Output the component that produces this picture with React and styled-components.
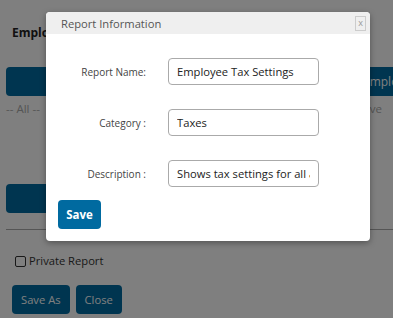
import React from 'react';
import styled, { createGlobalStyle } from 'styled-components';

const GlobalStyle = createGlobalStyle`
  body {
    margin: 0;
    font-family: "Open Sans", "Liberation Sans", sans-serif;
  }
`;

const Page = styled.div`
  position: relative;
  width: 393px;
  height: 318px;
  overflow: hidden;
  background: #fff;
  padding: 24px 0 0 6px;
  box-sizing: border-box;
`;

const Heading = styled.div`
  font-size: 12px;
  font-weight: bold;
  color: #222;
  padding-left: 6px;
  line-height: 17px;
`;

const Columns = styled.div`
  display: grid;
  grid-template-columns: 300px 120px;
  column-gap: 49px;
  margin-top: 26px;
`;

const Column = styled.div`
  display: flex;
  flex-direction: column;
`;

const ListHeader = styled.div`
  height: 29px;
  border-radius: 4px;
  background: #006aa0;
  color: #fff;
  font-size: 12px;
  line-height: 29px;
  padding-left: 8px;
  text-align: ${p => p.$align || 'left'};
`;

const Option = styled.div`
  font-size: 11.5px;
  color: #aaa;
  margin-top: 4px;
  line-height: 17px;
  margin-left: ${p => p.$indent || 0}px;
`;

const WideButton = styled.div`
  width: 180px;
  height: 29px;
  border-radius: 4px;
  background: #006aa0;
  margin-top: 67px;
`;

const Rule = styled.hr`
  border: 0;
  border-top: 1px solid #aaa;
  margin: 16px 0 0 0;
`;

const CheckRow = styled.label`
  display: flex;
  align-items: center;
  gap: 3px;
  margin: 23px 0 0 9px;
  font-size: 11.2px;
  color: #333;
  line-height: 16px;
`;

const Box = styled.span`
  width: 9px;
  height: 9px;
  border: 1px solid #333;
  border-radius: 2px;
  background: #fff;
`;

const Actions = styled.div`
  display: flex;
  gap: 6px;
  margin: 16px 0 0 6px;
`;

const ActionButton = styled.button`
  height: 29px;
  padding: 0 9px;
  border: 0;
  border-radius: 4px;
  background: #006aa0;
  color: #fff;
  font-family: inherit;
  font-size: 11.2px;
`;

const Overlay = styled.div`
  position: absolute;
  inset: 0;
  background: rgba(0, 0, 0, 0.5);
`;

const Dialog = styled.div`
  position: absolute;
  left: 46px;
  top: 12px;
  width: 324px;
  height: 229px;
  background: #fff;
  border-radius: 4px;
  box-shadow: 0 2px 6px rgba(0, 0, 0, 0.35);
  overflow: hidden;
`;

const DialogHeader = styled.div`
  height: 22px;
  background: #efefef;
  display: flex;
  align-items: center;
  justify-content: space-between;
  padding: 0 4px 0 15px;
`;

const DialogTitle = styled.span`
  font-size: 11.2px;
  color: #555;
`;

const CloseBox = styled.span`
  width: 9px;
  height: 13px;
  border: 1px solid #ccc;
  font-size: 9px;
  line-height: 12px;
  text-align: center;
  color: #999;
`;

const Form = styled.div`
  display: grid;
  grid-template-columns: 100px 151px;
  column-gap: 22px;
  row-gap: 24px;
  align-items: center;
  padding-top: 24px;
`;

const Label = styled.span`
  text-align: right;
  font-size: 10px;
  color: #444;
`;

const Input = styled.input`
  box-sizing: border-box;
  width: 151px;
  height: 27px;
  border: 1px solid #aaa;
  border-radius: 4px;
  padding: 0 8px;
  font-family: inherit;
  font-size: 11.2px;
  color: #222;
  outline: none;
`;

const SaveButton = styled.button`
  margin: 13px 0 0 12px;
  width: 43px;
  height: 29px;
  border: 0;
  border-radius: 4px;
  background: #006aa0;
  color: #fff;
  font-family: inherit;
  font-weight: bold;
  font-size: 11.5px;
  padding: 0;
`;

const fields = [
  ['Report Name:', 'Employee Tax Settings'],
  ['Category :', 'Taxes'],
  ['Description :', 'Shows tax settings for all active employees'],
];

export default function App() {
  return (
    <>
      <GlobalStyle />
      <Page>
        <Heading>Employee Tax Settings</Heading>
        <Columns>
          <Column>
            <ListHeader $align="center">Available Fields</ListHeader>
            <Option>-- All --</Option>
          </Column>
          <Column>
            <ListHeader>Employee Fields</ListHeader>
            <Option $indent={-5}>Active</Option>
          </Column>
        </Columns>
        <WideButton />
        <Rule />
        <CheckRow>
          <Box />
          Private Report
        </CheckRow>
        <Actions>
          <ActionButton>Save As</ActionButton>
          <ActionButton>Close</ActionButton>
        </Actions>
        <Overlay />
        <Dialog>
          <DialogHeader>
            <DialogTitle>Report Information</DialogTitle>
            <CloseBox>x</CloseBox>
          </DialogHeader>
          <Form>
            {fields.map(([label, value]) => (
              <React.Fragment key={label}>
                <Label>{label}</Label>
                <Input defaultValue={value} readOnly />
              </React.Fragment>
            ))}
          </Form>
          <SaveButton>Save</SaveButton>
        </Dialog>
      </Page>
    </>
  );
}
